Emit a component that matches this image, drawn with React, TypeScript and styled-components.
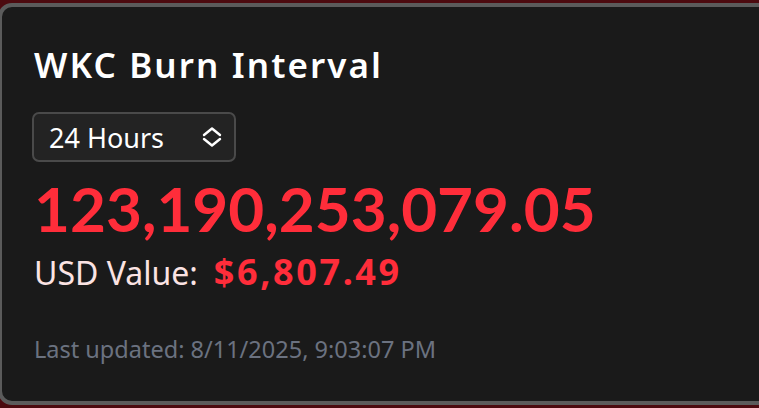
import React from 'react';
import styled, {createGlobalStyle} from "styled-components";

const GlobalStyle = createGlobalStyle`
  html, body {
    margin: 0;
    padding: 0;
    background: #4c0a0f;
    overflow: hidden;
  }
`

const Card = styled.section`
  box-sizing: border-box;
  margin: 3px 0 0 -2px;
  width: 780px;
  height: 402px;
  border: 4px solid #5b5b5b;
  border-radius: 14px;
  background: #1a1a1a;
  padding: 36px 0 0 32px;
  display: flex;
  flex-direction: column;
  align-items: flex-start;
  font-family: "Noto Sans", sans-serif;
`

const Title = styled.h2`
  margin: 0;
  font-size: 35px;
  line-height: 44px;
  font-weight: 600;
  letter-spacing: 2.1px;
  color: #ffffff;
`

const Select = styled.div`
  box-sizing: border-box;
  margin: 25px 0 0 -2px;
  width: 204px;
  height: 50px;
  padding: 0 10px 0 15px;
  display: flex;
  align-items: center;
  justify-content: space-between;
  border: 2px solid #4a4a4a;
  border-radius: 7px;
  background: #232323;
  color: #ffffff;
  font-size: 27px;
`

const Amount = styled.div`
  margin-top: 10px;
  font-family: Lato, "Noto Sans", sans-serif;
  font-size: 62px;
  line-height: 72px;
  font-weight: 700;
  color: #ff2d3a;
`

const UsdRow = styled.div`
  margin-top: 3px;
  display: flex;
  align-items: baseline;
  gap: 16px;
`

const UsdLabel = styled.span`
  font-size: 32px;
  color: #fbe3e3;
`

const UsdValue = styled.span`
  font-size: 36px;
  font-weight: 700;
  letter-spacing: 2.6px;
  color: #ff2d3a;
`

const Updated = styled.div`
  margin-top: 37px;
  font-size: 23.5px;
  color: #6b7280;
`

// up/down chevrons shown at the right of the select
const UpDown = () => (
    <svg width="24" height="24" viewBox="0 0 24 24" fill="none" stroke="#ffffff"
         strokeWidth="2.4" strokeLinecap="round" strokeLinejoin="round">
        <path d="m4 10 8-6.5 8 6.5"/>
        <path d="m4 14 8 6.5 8-6.5"/>
    </svg>
)

export default function App() {
    return (
        <>
            <GlobalStyle/>
            <Card>
                <Title>WKC Burn Interval</Title>
                <Select>
                    <span>24 Hours</span>
                    <UpDown/>
                </Select>
                <Amount>123,190,253,079.05</Amount>
                <UsdRow>
                    <UsdLabel>USD Value:</UsdLabel>
                    <UsdValue>$6,807.49</UsdValue>
                </UsdRow>
                <Updated>Last updated: 8/11/2025, 9:03:07 PM</Updated>
            </Card>
        </>
    );
}
